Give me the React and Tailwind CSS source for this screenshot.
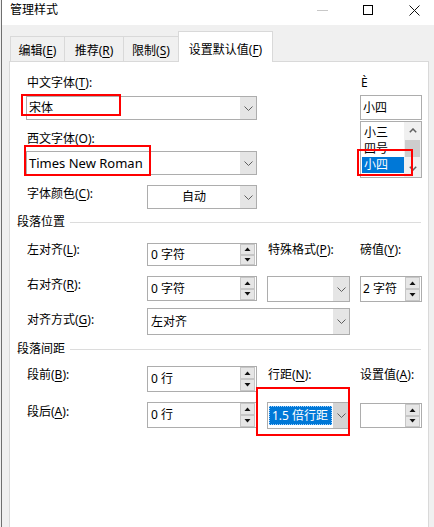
import clsx from 'clsx';

const U = ({ children }) => <span className="underline underline-offset-[2px]">{children}</span>;

function Chevron() {
  return (
    <svg width="9" height="5" viewBox="0 0 9 5">
      <path d="M0.5 0.5L4.5 4.5L8.5 0.5" fill="none" stroke="#5f5f5f" strokeWidth="1" />
    </svg>
  );
}

function Combo({ className, children, center, pressed }) {
  return (
    <div className={clsx('flex border border-[#adadad] bg-white', className)}>
      <div className={clsx('flex-1 flex items-center min-w-0', center ? 'justify-center' : 'pl-[2px]')}>
        {children}
      </div>
      <div className={clsx('w-[16px] flex items-center justify-center', pressed ? 'bg-[#d4d4d4]' : 'bg-[#e5e5e5]')}>
        <Chevron />
      </div>
    </div>
  );
}

function SpinBtn({ up }) {
  return (
    <div className="flex-1 flex items-center justify-center border border-[#c6c6c6] bg-[#e6e6e6]">
      <svg width="7" height="4" viewBox="0 0 7 4">
        <path d={up ? 'M0.5 4L3.5 0.5L6.5 4Z' : 'M0.5 0L3.5 3.5L6.5 0Z'} fill="#111" />
      </svg>
    </div>
  );
}

function Spin({ className, children }) {
  return (
    <div className={clsx('flex border border-[#adadad] bg-white', className)}>
      <div className="flex-1 flex items-center pl-[3px]">{children}</div>
      <div className="flex flex-col w-[15px] mr-[1px]">
        <SpinBtn up />
        <SpinBtn />
      </div>
    </div>
  );
}

function Header({ children, className }) {
  return (
    <div className={clsx('ml-[7px] w-[404px] flex items-center', className)}>
      <span>{children}</span>
      <div className="flex-1 h-px bg-[#dcdcdc] ml-[5px]" />
    </div>
  );
}

export default function App() {
  return (
    <div className="relative w-[434px] h-[527px] overflow-hidden bg-[#f0f0f0] font-['Noto_Sans','Noto_Sans_CJK_SC',sans-serif] text-[12px] leading-[16px] text-black">
      <div className="ml-[1px] h-full border-l border-[#6f6f6f] flex flex-col">
        {/* title bar */}
        <div className="h-[25px] bg-white flex shrink-0 overflow-hidden">
          <div className="w-[297px] h-[20px] shrink-0 flex items-center pl-[8px]">管理样式</div>
          <div className="w-[46px] h-[20px] shrink-0 flex items-center justify-center">
            <div className="w-[11px] h-px bg-[#c8c8c8]" />
          </div>
          <div className="w-[46px] h-[20px] shrink-0 flex items-center justify-center">
            <div className="w-[10px] h-[10px] border border-black" />
          </div>
          <div className="w-[46px] h-[20px] shrink-0 flex items-center justify-center">
            <svg width="11" height="11" viewBox="0 0 11 11">
              <path d="M0.5 0.5L10.5 10.5M10.5 0.5L0.5 10.5" stroke="#111" strokeWidth="1" />
            </svg>
          </div>
        </div>

        {/* tabs */}
        <div className="mt-[6px] ml-[8px] flex items-end h-[31px] -mb-px relative z-10 shrink-0">
          <div className="w-[54px] h-[26px] border-t border-l border-[#d9d9d9] flex justify-center items-center pt-[2px]">
            编辑(<U>E</U>)
          </div>
          <div className="w-[59px] h-[26px] border-t border-l border-[#d9d9d9] flex justify-center items-center pt-[2px]">
            推荐(<U>R</U>)
          </div>
          <div className="w-[55px] h-[26px] border-t border-l border-[#d9d9d9] flex justify-center items-center pt-[2px]">
            限制(<U>S</U>)
          </div>
          <div className="w-[95px] h-[31px] border border-b-0 border-[#d9d9d9] bg-white flex justify-center items-center pt-[5px]">
            设置默认值(<U>F</U>)
          </div>
        </div>

        {/* tab panel */}
        <div className="ml-[7px] w-[420px] flex-1 bg-white border border-b-0 border-[#d9d9d9]">
          <div className="flex">
            <div className="ml-[16px] w-[231px]">
              <div className="mt-[13px] pl-[1px]">中文字体(<U>T</U>):</div>
              <Combo className="mt-[5px] h-[24px]">宋体</Combo>
              <div className="mt-[11px] pl-[1px]">西文字体(<U>O</U>):</div>
              <Combo className="mt-[4px] h-[24px]">
                <span className="text-[13px]">Times New Roman</span>
              </Combo>
              <div className="mt-[10px] flex">
                <div className="w-[121px] pl-[1px] pt-[1px]">字体颜色(<U>C</U>):</div>
                <Combo className="w-[110px] h-[24px]" center>自动</Combo>
              </div>
            </div>
            <div className="ml-[103px] w-[62px]">
              <div className="mt-[13px] pl-[1px]">È</div>
              <div className="mt-[4px] h-[25px] border border-[#adadad] flex items-center pl-[2px]">小四</div>
              <div className="mt-[1px] h-[57px] border border-[#adadad] flex">
                <div className="flex-1 pt-[3px] pl-[1px]">
                  <div className="h-[16px] pl-[2px]">小三</div>
                  <div className="h-[16px] pl-[2px]">四号</div>
                  <div className="h-[16px] pl-[2px] bg-[#0078d7] text-white">小四</div>
                </div>
                <div className="w-[17px] bg-[#f0f0f0] flex flex-col">
                  <div className="h-[17px] flex items-center justify-center">
                    <svg width="8" height="5" viewBox="0 0 8 5">
                      <path d="M0.8 4.3L4 1L7.2 4.3" fill="none" stroke="#606060" strokeWidth="1.5" />
                    </svg>
                  </div>
                  <div className="mt-[1px] h-[17px] mx-[1px] bg-[#cdcdcd]" />
                  <div className="flex-1" />
                  <div className="h-[17px] flex items-center justify-center">
                    <svg width="8" height="5" viewBox="0 0 8 5">
                      <path d="M0.8 0.7L4 4L7.2 0.7" fill="none" stroke="#606060" strokeWidth="1.5" />
                    </svg>
                  </div>
                </div>
              </div>
            </div>
          </div>

          <Header className="mt-[5px]">段落位置</Header>

          <div className="mt-[12px] flex items-start">
            <div className="ml-[17px] w-[120px]">左对齐(<U>L</U>):</div>
            <Spin className="mt-[1px] w-[110px] h-[23px]">0 字符</Spin>
            <div className="ml-[10px] w-[83px] pl-[1px]">特殊格式(<U>P</U>):</div>
            <div className="ml-[10px] w-[62px]">磅值(<U>Y</U>):</div>
          </div>

          <div className="mt-[10px] flex items-start">
            <div className="ml-[17px] w-[120px] mt-[1px]">右对齐(<U>R</U>):</div>
            <Spin className="w-[110px] h-[25px]">0 字符</Spin>
            <Combo className="ml-[10px] w-[83px] h-[26px]" />
            <Spin className="ml-[10px] w-[62px] h-[26px]">
              <span className="-ml-[1px]">2 字符</span>
            </Spin>
          </div>

          <div className="mt-[6px] flex items-start">
            <div className="ml-[17px] w-[120px] mt-[4px]">对齐方式(<U>G</U>):</div>
            <Combo className="w-[203px] h-[27px]">
              <span className="pl-[1px]">左对齐</span>
            </Combo>
          </div>

          <Header className="mt-[6px]">段落间距</Header>

          <div className="mt-[9px] flex items-start">
            <div className="ml-[17px] w-[120px] mt-[1px]">段前(<U>B</U>):</div>
            <Spin className="w-[110px] h-[26px]">0 行</Spin>
            <div className="ml-[10px] w-[83px] pl-[1px] mt-[1px]">行距(<U>N</U>):</div>
            <div className="ml-[10px] w-[62px] mt-[1px]">设置值(<U>A</U>):</div>
          </div>

          <div className="mt-[10px] flex items-start">
            <div className="ml-[17px] w-[120px] mt-[2px]">段后(<U>A</U>):</div>
            <Spin className="w-[110px] h-[26px]">0 行</Spin>
            <div className="ml-[10px] w-[83px] h-[27px] flex border border-[#adadad] bg-white">
              <div className="flex-1 flex items-center px-[1px]">
                <span className="flex-1 h-[19px] flex items-center pl-[2px] bg-[#0078d7] text-white border border-dotted border-[#9fd0ff]">
                  1.5 倍行距
                </span>
              </div>
              <div className="w-[16px] flex items-center justify-center bg-[#d4d4d4]">
                <Chevron />
              </div>
            </div>
            <Spin className="ml-[10px] mt-[1px] w-[62px] h-[25px]" />
          </div>
        </div>
      </div>

      {/* red annotation boxes */}
      <div className="absolute left-[186px] top-[31px] w-[85px] h-[28px] border-2 border-[#ff0000]" />
      <div className="absolute left-[21px] top-[94px] w-[100px] h-[22px] border-2 border-[#ff0000]" />
      <div className="absolute left-[24px] top-[145px] w-[127px] h-[31px] border-2 border-[#ff0000]" />
      <div className="absolute left-[357px] top-[149px] w-[56px] h-[27px] border-2 border-[#ff0000]" />
      <div className="absolute left-[256px] top-[387px] w-[94px] h-[49px] border-2 border-[#ff0000]" />
    </div>
  );
}
